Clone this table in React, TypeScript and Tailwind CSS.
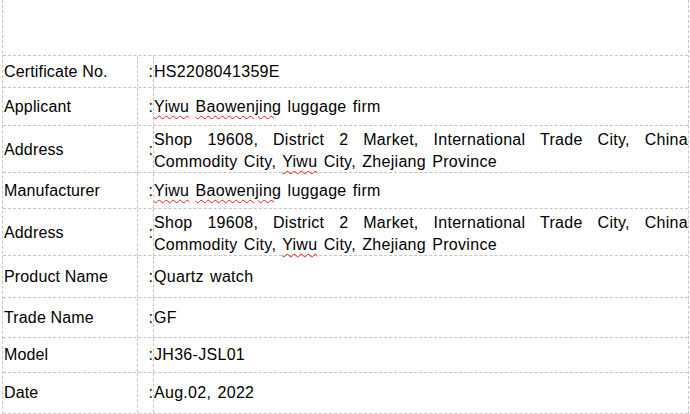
function Sp({ children }: { children: React.ReactNode }) {
  return (
    <span className="underline decoration-wavy decoration-[#e81c1c] decoration-1 underline-offset-[3px]">
      {children}
    </span>
  );
}

const address = (
  <div className="w-full pt-[3px] leading-[22px]">
    <p className="text-justify [text-align-last:justify]">
      Shop 19608, District 2 Market, International Trade City, China
    </p>
    <p>
      Commodity City, <Sp>Yiwu</Sp> City, Zhejiang Province
    </p>
  </div>
);

const firm = (
  <span>
    <Sp>Yiwu</Sp> <Sp>Baowenjing</Sp> luggage firm
  </span>
);

const rows: { label: string; value: React.ReactNode; h: string }[] = [
  { label: "Certificate No.", value: "HS2208041359E", h: "h-[32px]" },
  { label: "Applicant", value: firm, h: "h-[38px]" },
  { label: "Address", value: address, h: "h-[47px]" },
  { label: "Manufacturer", value: firm, h: "h-[36px]" },
  { label: "Address", value: address, h: "h-[47px]" },
  { label: "Product Name", value: "Quartz watch", h: "h-[42px]" },
  { label: "Trade Name", value: "GF", h: "h-[40px]" },
  { label: "Model", value: "JH36-JSL01", h: "h-[35px]" },
  { label: "Date", value: "Aug.02, 2022", h: "h-[42px] border-b" },
];

export default function App() {
  return (
    <div className="h-[414px] w-[690px] overflow-hidden bg-white font-['Liberation_Sans',Arial,sans-serif] text-[16px] text-black">
      <div className="ml-[2px] w-[687px] border-x border-dashed border-[#c4c4c4]">
        <div className="h-[55px]" />
        {rows.map((r, i) => (
          <div
            key={i}
            className={`grid grid-cols-[135px_16px_1fr] border-t border-dashed border-[#c4c4c4] ${r.h}`}
          >
            <div className="flex items-center border-r border-dashed border-[#c4c4c4] pl-[1px] leading-[20px] tracking-[0.15px]">
              {r.label}
            </div>
            <div className="flex items-center justify-end border-r border-dashed border-[#c4c4c4] leading-[20px]">
              :
            </div>
            <div className="flex items-center leading-[20px] tracking-[0.3px] [word-spacing:1.5px]">
              {r.value}
            </div>
          </div>
        ))}
      </div>
    </div>
  );
}
